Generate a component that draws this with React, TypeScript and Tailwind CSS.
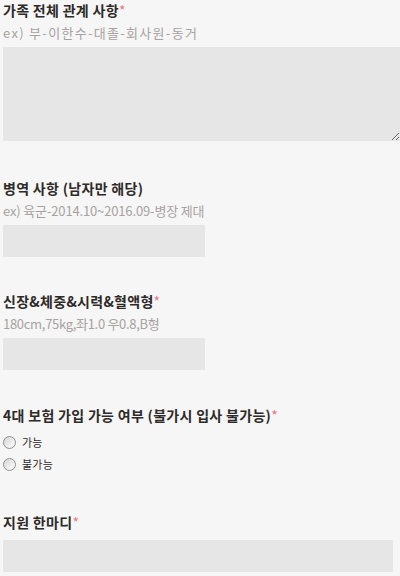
import React from "react";

function Label({ text, required }: { text: string; required?: boolean }) {
	return (
		<div className="h-5 text-[14px] leading-5 font-bold tracking-[0.3px] text-[#2e2a28] whitespace-nowrap">
			{text}
			{required && <span className="text-[#ee7580] font-normal">*</span>}
		</div>
	);
}

function Hint({ text, className = "" }: { text: string; className?: string }) {
	return (
		<div className={`mt-[3px] h-5 text-[13px] leading-5 text-[#a7a2a0] whitespace-nowrap ${className}`}>
			{text}
		</div>
	);
}

function Radio({ label }: { label: string }) {
	return (
		<label className="flex items-center h-[22px] gap-[6px] text-[11px] tracking-[0.2px] text-[#2e2a28]">
			<input
				type="radio"
				name="insurance"
				className="appearance-none w-[13px] h-[13px] rounded-full border border-[#8f8f8f] bg-gradient-to-br from-[#d6d6d6] to-white shrink-0 m-0"
			/>
			{label}
		</label>
	);
}

export default function App() {
	return (
		<div
			className="min-h-[576px] bg-[#f6f6f6] pl-[3px] overflow-hidden"
			style={{ fontFamily: '"Noto Sans CJK KR", "Liberation Sans", sans-serif' }}
		>
			<Label text="가족 전체 관계 사항" required />
			<Hint text="ex) 부-이한수-대졸-회사원-동거" className="tracking-[1.3px]" />
			<textarea className="block mt-[4px] w-[397px] h-[94px] bg-[#e6e6e6] outline-none resize" />

			<div className="mt-[37px]">
				<Label text="병역 사항 (남자만 해당)" />
				<Hint text="ex) 육군-2014.10~2016.09-병장 제대" className="tracking-[-0.15px]" />
				<input className="block mt-[4px] w-[202px] h-8 bg-[#e6e6e6] outline-none" />
			</div>

			<div className="mt-[34px]">
				<Label text="신장&체중&시력&혈액형" required />
				<Hint text="180cm,75kg,좌1.0 우0.8,B형" className="tracking-[-0.3px]" />
				<input className="block mt-[4px] w-[202px] h-8 bg-[#e6e6e6] outline-none" />
			</div>

			<div className="mt-[35px]">
				<Label text="4대 보험 가입 가능 여부 (불가시 입사 불가능)" required />
				<div className="mt-[6px]">
					<Radio label="가능" />
					<Radio label="불가능" />
				</div>
			</div>

			<div className="mt-[37px]">
				<Label text="지원 한마디" required />
				<input className="block mt-[8px] w-[390px] h-8 bg-[#e6e6e6] outline-none" />
			</div>
		</div>
	);
}
